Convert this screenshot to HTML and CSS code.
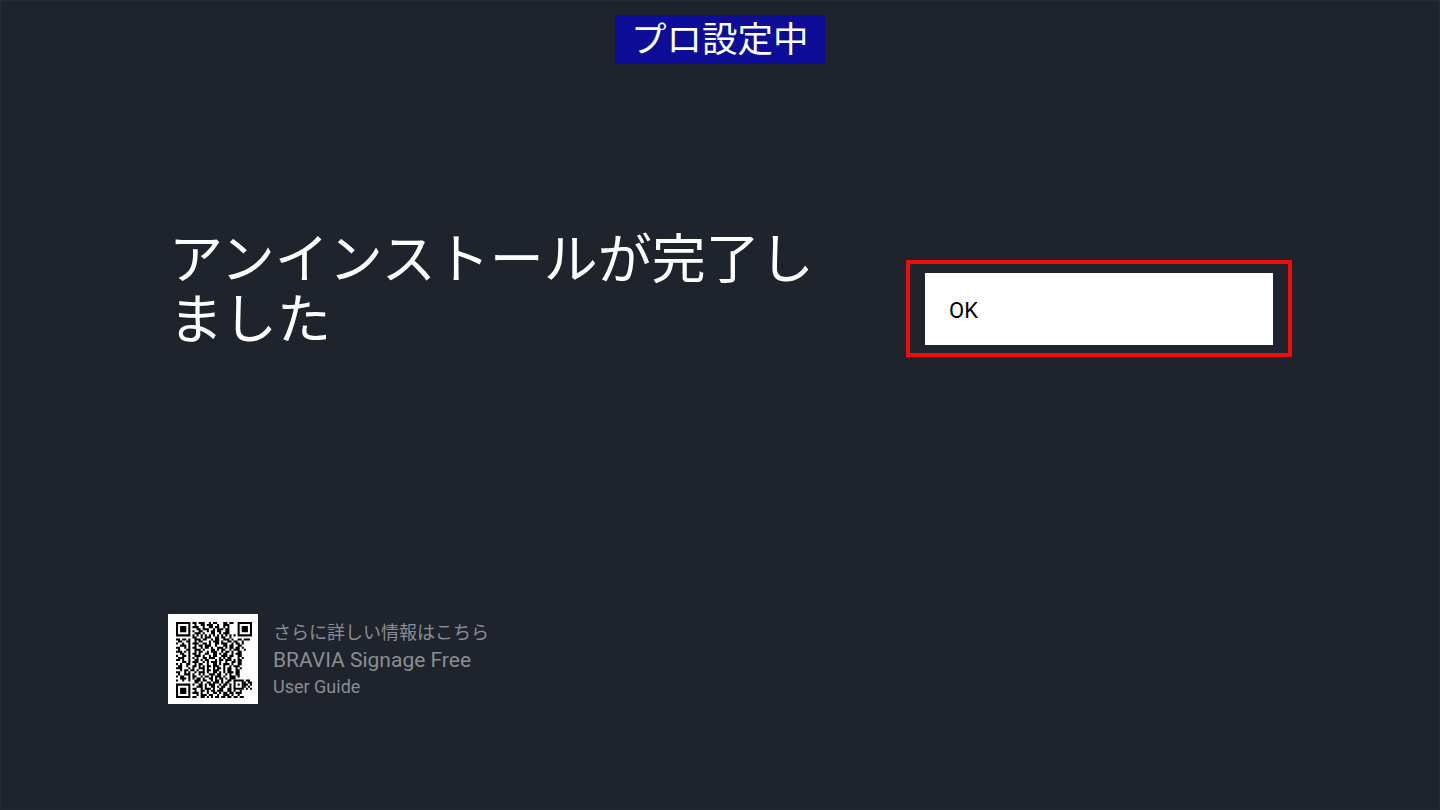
FILE: index.html
```html
<!DOCTYPE html>
<html lang="ja">
<head>
<meta charset="utf-8">
<title>プロ設定中</title>
<link rel="stylesheet" href="styles.css">
</head>
<body>
<div class="screen">
  <header class="top"><div class="banner">プロ設定中</div></header>
  <main class="main">
    <h1 class="title">アンインストールが完了しました</h1>
    <div class="focus"><button class="ok" type="button">OK</button></div>
  </main>
  <footer class="guide">
    <div class="qr">
      <svg class="qr-code" viewBox="0 0 37 37" aria-hidden="true">
        <path class="qr-data" d="M8 .5h2m1 0h3m2 0h1m1 0h2m3 0h2m1 0h2M9 1.5h1m2 0h2m1 0h3m2 0h1m2 0h3M8 2.5h3m2 0h1m2 0h2m1 0h2m2 0h1m1 0h1M10 3.5h2m1 0h3m2 0h1m1 0h3m1 0h2M8 4.5h1m2 0h2m2 0h1m1 0h2m1 0h2m2 0h2M9 5.5h3m1 0h1m3 0h2m2 0h1m1 0h3M8 6.5h1m1 0h1m1 0h1m1 0h1m1 0h1m1 0h1m1 0h1m1 0h1m1 0h1m1 0h1m1 0h1M8 7.5h2m2 0h1m1 0h3m2 0h2m1 0h2m2 0h1M0 8.5h2m1 0h2m1 0h1m2 0h3m1 0h2m2 0h1m1 0h2m2 0h3m1 0h1m2 0h2m1 0h3M1 9.5h2m2 0h2m2 0h1m1 0h2m3 0h1m1 0h3m1 0h1m2 0h2m1 0h2m2 0h1M0 10.5h1m2 0h1m2 0h1m1 0h3m2 0h2m1 0h1m2 0h2m1 0h3m2 0h1m1 0h2m1 0h1M2 11.5h3m1 0h1m2 0h1m1 0h2m1 0h3m2 0h1m3 0h2m1 0h2m2 0h2M0 12.5h2m2 0h1m1 0h1m1 0h2m2 0h1m1 0h2m1 0h1m2 0h3m1 0h1m1 0h2m1 0h2m1 0h1M1 13.5h1m3 0h2m2 0h3m1 0h1m3 0h2m1 0h1m1 0h2m2 0h1m1 0h3m2 0h1M0 14.5h3m1 0h1m1 0h1m2 0h1m1 0h2m2 0h1m1 0h3m2 0h1m1 0h2m1 0h1m2 0h2M2 15.5h2m2 0h1m1 0h2m1 0h1m2 0h2m2 0h2m1 0h1m1 0h2m2 0h1m1 0h3M0 16.5h1m2 0h2m1 0h1m2 0h3m1 0h1m2 0h1m1 0h2m2 0h3m1 0h2m2 0h2M1 17.5h3m2 0h1m1 0h1m1 0h1m2 0h2m1 0h3m2 0h1m1 0h1m1 0h2m3 0h1m1 0h1M0 18.5h2m1 0h1m2 0h1m2 0h2m1 0h1m1 0h2m3 0h1m1 0h2m1 0h3m1 0h1m1 0h2M3 19.5h2m1 0h1m1 0h3m2 0h1m1 0h1m1 0h3m1 0h1m2 0h1m2 0h2m1 0h2M0 20.5h1m1 0h1m2 0h2m2 0h1m1 0h2m2 0h1m2 0h2m1 0h1m1 0h3m1 0h1m2 0h2M1 21.5h2m2 0h1m2 0h2m1 0h1m1 0h1m1 0h2m1 0h3m2 0h1m2 0h1m1 0h3M0 22.5h3m3 0h1m1 0h1m2 0h3m1 0h1m2 0h1m1 0h2m1 0h1m1 0h2m2 0h1m1 0h1M2 23.5h1m1 0h2m1 0h2m1 0h1m2 0h1m1 0h2m1 0h3m2 0h1m1 0h2m2 0h2M0 24.5h2m2 0h1m1 0h1m2 0h1m1 0h3m1 0h1m2 0h2m1 0h1m1 0h1m1 0h3m1 0h2M1 25.5h1m2 0h3m1 0h1m2 0h1m1 0h1m2 0h3m1 0h2m2 0h1m1 0h1m2 0h2M0 26.5h1m1 0h2m2 0h1m1 0h2m2 0h1m1 0h2m1 0h1m1 0h3m1 0h1m2 0h3m1 0h1M2 27.5h3m1 0h1m1 0h1m1 0h2m1 0h1m2 0h2m1 0h1m1 0h2m1 0h1m1 0h3M0 28.5h1m2 0h1m2 0h1m2 0h3m1 0h2m2 0h1m1 0h2m1 0h1M25 28.5h2M34 28.5h2M9 29.5h2m1 0h1m2 0h2m1 0h3m1 0h1m1 0h2M33 29.5h1M35 29.5h2M8 30.5h1m2 0h2m1 0h1m1 0h3m2 0h1m1 0h2m1 0h1M33 30.5h2M36 30.5h1M10 31.5h3m1 0h1m2 0h2m1 0h1m1 0h2m2 0h1M33 31.5h1M35 31.5h1M8 32.5h2m2 0h1m1 0h3m1 0h1m2 0h2M25 32.5h2M34 32.5h1M36 32.5h1M9 33.5h1m2 0h2m1 0h1m1 0h2m1 0h3m2 0h2m1 0h1m2 0h1M8 34.5h3m1 0h1m2 0h1m2 0h2m1 0h1m1 0h2m1 0h2m1 0h3M10 35.5h1m1 0h3m1 0h2m2 0h1m2 0h3m1 0h1m2 0h1M8 36.5h2m2 0h2m1 0h1m1 0h1m1 0h2m1 0h2m1 0h2m1 0h2m1 0h2"/>
        <path class="qr-solid" fill-rule="evenodd" d="M0 0h7v7H0zM1 1v5h5V1zM2 2h3v3H2zM30 0h7v7h-7zM31 1v5h5V1zM32 2h3v3h-3zM0 30h7v7H0zM1 31v5h5v-5zM2 32h3v3H2zM28 28h5v5h-5zM29 29v3h3v-3zM30 30h1v1h-1z"/>
      </svg>
    </div>
    <div class="guide-text">
      <p class="guide-lead">さらに詳しい情報はこちら</p>
      <p class="guide-name">BRAVIA Signage Free</p>
      <p class="guide-sub">User Guide</p>
    </div>
  </footer>
</div>
</body>
</html>
```

FILE: styles.css
```css
* { box-sizing: border-box; }
html, body { margin: 0; padding: 0; }
body {
  width: 1440px;
  height: 810px;
  overflow: hidden;
  background: #1f232c;
  font-family: Roboto, "Noto Sans CJK JP", sans-serif;
}
.screen {
  width: 1440px;
  height: 810px;
  display: flex;
  flex-direction: column;
  padding-top: 15px;
  outline: 1px solid #262a33;
  outline-offset: -1px;
}
.top {
  display: flex;
  justify-content: center;
  height: 49px;
}
.banner {
  width: 210px;
  height: 49px;
  padding-left: 16px;
  background: #0d0d98;
  color: #fff;
  font-size: 35.5px;
  line-height: 51px;
  white-space: nowrap;
}
.main {
  display: flex;
  align-items: flex-start;
  justify-content: space-between;
  height: 550px;
  padding: 149px 148px 0 169px;
}
.title {
  width: 660px;
  margin: 18px 0 0;
  color: #fff;
  font-size: 54px;
  font-weight: 400;
  line-height: 60px;
}
.focus {
  width: 386px;
  height: 97px;
  margin-top: 47px;
  border: 4px solid #ee0c0c;
  padding: 9px 15px 0;
}
.ok {
  display: block;
  width: 348px;
  height: 72px;
  border: 0;
  padding: 3px 0 0 24px;
  background: #fff;
  color: #000;
  font-family: Roboto, sans-serif;
  font-size: 22px;
  text-align: left;
}
.guide {
  display: flex;
  align-items: flex-start;
  gap: 15px;
  padding-left: 168px;
}
.qr {
  width: 90px;
  height: 90px;
  padding: 8px 6px 6px 8px;
  background: #fff;
}
.qr-code {
  display: block;
  width: 76px;
  height: 76px;
  filter: blur(0.3px);
}
.qr-data {
  fill: none;
  stroke: #000;
  stroke-width: 1;
}
.qr-solid {
  fill: #000;
}
.guide-text {
  display: flex;
  flex-direction: column;
  padding-top: 7px;
  color: #8b8d92;
}
.guide-lead {
  margin: 0;
  font-size: 18px;
  line-height: 24px;
}
.guide-name {
  margin: 2px 0 0;
  font-size: 21px;
  line-height: 27px;
}
.guide-sub {
  margin: 0;
  font-size: 18px;
  line-height: 26px;
}
```
